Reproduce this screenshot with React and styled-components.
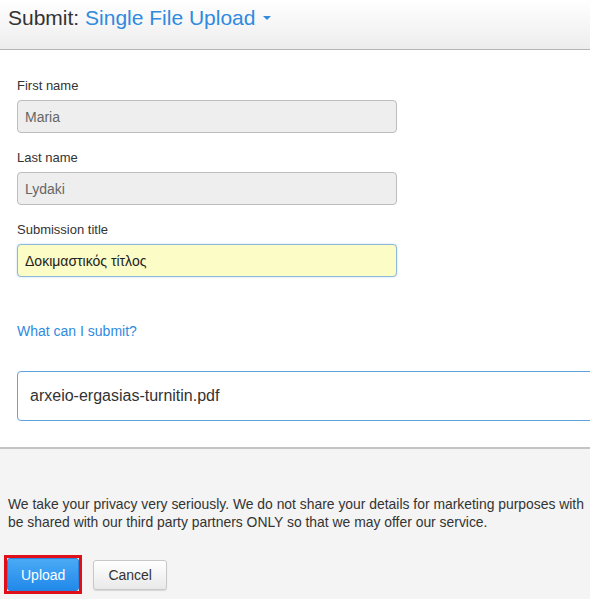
import styled, { createGlobalStyle } from "styled-components";

const GlobalStyle = createGlobalStyle`
    html, body {
        margin: 0;
        padding: 0;
        background: #f4f4f4;
        overflow: hidden;
    }
    body {
        font-family: "Liberation Sans", Arial, sans-serif;
        color: #333;
    }
`

const Frame = styled.div`
    width: 590px;
    height: 599px;
    overflow: hidden;
`

const Page = styled.div`
    width: 700px;
`

const Header = styled.div`
    height: 50px;
    background: linear-gradient(#ffffff, #ededed);
    border-bottom: 1px solid #b5b5b5;
    padding: 6px 8px 0;
    box-sizing: border-box;
`

const Title = styled.h1`
    margin: 0;
    font-size: 21px;
    font-weight: normal;
    color: #333;
    line-height: 24px;
`

const Mode = styled.span`
    color: #2f8ae0;
`

const Caret = styled.span`
    display: inline-block;
    margin-left: 8px;
    vertical-align: 5px;
    border-left: 4px solid transparent;
    border-right: 4px solid transparent;
    border-top: 4px solid #2f8ae0;
`

const Body = styled.div`
    background: #fff;
    padding: 28px 0 26px 17px;
    border-bottom: 2px solid #c4c4c4;
`

const Field = styled.div`
    display: flex;
    flex-direction: column;
    margin-bottom: 17px;
`

const Label = styled.label`
    font-size: 13px;
    line-height: 15px;
    margin-bottom: 7px;
    color: #333;
`

const Input = styled.input`
    width: 380px;
    height: 33px;
    box-sizing: border-box;
    border: 1px solid ${(p) => (p.$active ? "#8fb8d6" : "#bdbdbd")};
    border-radius: 4px;
    background: ${(p) => (p.$active ? "#fcfcc6" : "#eeeeee")};
    color: ${(p) => (p.$active ? "#222" : "#666")};
    font-family: "Liberation Sans", Arial, sans-serif;
    font-size: 14px;
    padding: 0 7px;
    outline: none;
    box-shadow: ${(p) => (p.$active ? "0 0 2px rgba(102,175,233,0.5)" : "none")};

    &:disabled {
        opacity: 1;
    }
`

const HelpLink = styled.a`
    display: block;
    margin-top: 47px;
    font-size: 14px;
    color: #2f8ae0;
    text-decoration: none;
    line-height: 15px;
`

const FileBox = styled.div`
    margin-top: 32px;
    height: 50px;
    box-sizing: border-box;
    border: 1px solid #5fa4dc;
    border-radius: 4px;
    display: flex;
    align-items: center;
    padding-left: 12px;
    font-size: 16px;
    color: #333;
`

const Footer = styled.div`
    background: #f4f4f4;
    padding: 46px 8px 0;
`

const Privacy = styled.p`
    margin: 0;
    font-size: 13.9px;
    line-height: 18px;
    color: #333;
    white-space: nowrap;
`

const Actions = styled.div`
    display: flex;
    align-items: center;
    gap: 11px;
    margin-top: 24px;
`

const Highlight = styled.div`
    border: 3px solid #e0101a;
    margin-left: -4px;
    display: flex;
`

const Button = styled.button`
    height: ${(p) => (p.$primary ? "33px" : "30px")};
    padding: 0 ${(p) => (p.$primary ? "13px" : "14px")};
    border-radius: 3px;
    font-family: "Liberation Sans", Arial, sans-serif;
    font-size: 14px;
    cursor: pointer;
    border: 1px solid ${(p) => (p.$primary ? "#2b84dc" : "#c8c8c8")};
    color: ${(p) => (p.$primary ? "#fff" : "#333")};
    background: ${(p) =>
        p.$primary
            ? "linear-gradient(#4aaaf5, #2289ea)"
            : "linear-gradient(#ffffff, #e9e9e9)"};
    box-shadow: ${(p) => (p.$primary ? "none" : "0 1px 1px rgba(0,0,0,0.12)")};
`

const App = () => {
    return (
        <Frame>
            <GlobalStyle />
            <Page>
                <Header>
                    <Title>
                        Submit: <Mode>Single File Upload</Mode>
                        <Caret />
                    </Title>
                </Header>
                <Body>
                    <Field>
                        <Label>First name</Label>
                        <Input value="Maria" disabled readOnly />
                    </Field>
                    <Field>
                        <Label>Last name</Label>
                        <Input value="Lydaki" disabled readOnly />
                    </Field>
                    <Field>
                        <Label>Submission title</Label>
                        <Input $active defaultValue="Δοκιμαστικός τίτλος" />
                    </Field>
                    <HelpLink href="#">What can I submit?</HelpLink>
                    <FileBox>arxeio-ergasias-turnitin.pdf</FileBox>
                </Body>
                <Footer>
                    <Privacy>
                        We take your privacy very seriously. We do not share your details for marketing purposes with
                        <br />
                        be shared with our third party partners ONLY so that we may offer our service.
                    </Privacy>
                    <Actions>
                        <Highlight>
                            <Button $primary type="button">Upload</Button>
                        </Highlight>
                        <Button type="button">Cancel</Button>
                    </Actions>
                </Footer>
            </Page>
        </Frame>
    );
}

export default App;
